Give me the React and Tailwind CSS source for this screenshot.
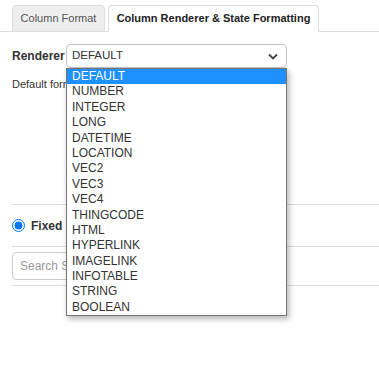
import React from 'react';

const renderers = [
  'DEFAULT', 'NUMBER', 'INTEGER', 'LONG', 'DATETIME', 'LOCATION', 'VEC2', 'VEC3',
  'VEC4', 'THINGCODE', 'HTML', 'HYPERLINK', 'IMAGELINK', 'INFOTABLE', 'STRING', 'BOOLEAN',
];

export default function App() {
  return (
    <div className="relative w-[379px] h-[375px] overflow-hidden bg-white text-[#333] font-['Liberation_Sans',Arial,sans-serif]">
      {/* Tabs */}
      <div className="flex items-end pl-3 pt-[5px] border-b border-[#ddd]">
        <div className="-mb-px mr-[3px] flex h-[27px] w-[93px] items-center justify-center rounded-t-[4px] border border-[#ddd] bg-[#eee] text-[11px] text-[#555]">
          Column Format
        </div>
        <div className="-mb-px flex h-[27px] w-[211px] items-center justify-center rounded-t-[4px] border border-[#ddd] border-b-white bg-white text-[11px] font-bold text-[#222]">
          Column Renderer &amp; State Formatting
        </div>
      </div>

      <div className="pl-3">
        {/* Renderer select */}
        <div className="mt-3 flex h-[24px] items-center">
          <span className="w-[54px] shrink-0 text-[12px] font-bold text-[#333]">Renderer</span>
          <div className="flex h-[24px] w-[221px] items-center justify-between rounded-[4px] border border-[#c4c4c4] bg-white pl-[5px] pr-[8px] text-[11.5px] text-[#333]">
            <span>DEFAULT</span>
            <svg width="10" height="7" viewBox="0 0 10 7">
              <polyline points="1,1.5 5,5.5 9,1.5" fill="none" stroke="#444" strokeWidth="1.8" />
            </svg>
          </div>
        </div>

        <p className="mt-[10px] text-[11px] leading-[13px] text-[#333]">Default format: value shown as-is</p>

        {/* Fixed state */}
        <div className="mt-[113px] flex h-[43px] items-center gap-[6px] border-y border-[#ddd]">
          <input type="radio" checked readOnly className="m-0 h-[13px] w-[13px]" />
          <span className="text-[12px] font-bold text-[#333]">Fixed State</span>
        </div>

        <div className="py-[5px]">
          <div className="flex h-[28px] w-[250px] items-center rounded-[4px] border border-[#ccc] px-[7px] text-[12px] text-[#999]">
            Search States
          </div>
        </div>
        <div className="border-t border-[#ddd]" />
      </div>

      {/* Open dropdown list */}
      <ul className="absolute left-[66px] top-[68px] w-[221px] border border-[#767676] bg-white shadow-[2px_3px_6px_rgba(0,0,0,0.3)]">
        {renderers.map((r, i) => (
          <li
            key={r}
            className={`h-[15.4px] pl-[5px] text-[12px] leading-[15.4px] ${i === 0 ? 'bg-[#1e90ff] text-white' : 'text-[#333]'}`}
          >
            {r}
          </li>
        ))}
      </ul>
    </div>
  );
}
